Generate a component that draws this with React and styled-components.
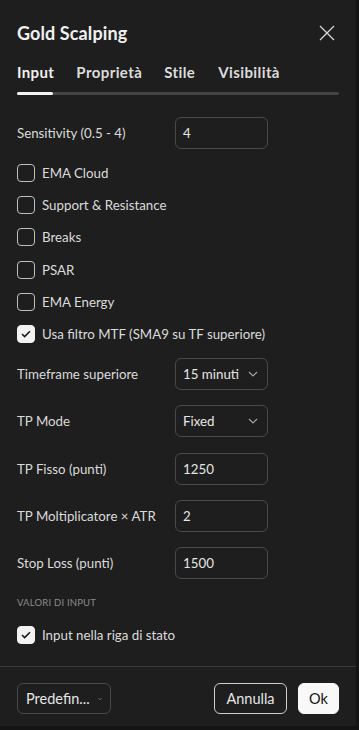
import styled, { createGlobalStyle } from 'styled-components';

const Global = createGlobalStyle`
  html, body {
    margin: 0;
    padding: 0;
    background: #141414;
  }
  body {
    font-family: Lato, "Noto Sans", sans-serif;
    -webkit-font-smoothing: antialiased;
  }
`

const Dialog = styled.div`
  width: 356px;
  height: 726px;
  background: #1e1e1e;
  color: #dbdbdb;
  display: flex;
  flex-direction: column;
  box-sizing: border-box;
`

const Header = styled.div`
  display: flex;
  align-items: center;
  justify-content: space-between;
  padding: 20px 20px 0 17px;
  height: 25px;
  h1 {
    margin: 0;
    font-size: 18px;
    font-weight: 700;
    color: #f0f0f0;
    letter-spacing: 0.1px;
  }
`

const Close = styled.button`
  background: none;
  border: none;
  padding: 0;
  width: 18px;
  height: 18px;
  display: flex;
  align-items: center;
  justify-content: center;
  color: #d6d6d6;
`

const Tabs = styled.div`
  margin: 17px 17px 0 17px;
  display: flex;
  height: 20px;
`

const Tab = styled.div`
  font-size: 15px;
  font-weight: 700;
  letter-spacing: 0.4px;
  color: ${p => (p.active ? '#f2f2f2' : '#dcdcdc')};
  margin-right: ${p => p.gap}px;
  line-height: 20px;
`

const Track = styled.div`
  margin: 10px 17px 0 17px;
  height: 3px;
  border-radius: 2px;
  background: #434343;
  display: flex;
`

const Indicator = styled.div`
  width: ${p => p.w}px;
  height: 3px;
  border-radius: 2px;
  background: #f2f2f2;
`

const Body = styled.div`
  flex: 1;
  padding: 22px 17px 0 17px;
  display: flex;
  flex-direction: column;
`

const FieldRow = styled.div`
  display: grid;
  grid-template-columns: 158px 93px;
  align-items: center;
  height: 32px;
  margin-bottom: ${p => p.mb ?? 15.3}px;
  font-size: 13.3px;
`

const Box = styled.div`
  height: 32px;
  box-sizing: border-box;
  border: 1px solid #4a4a4a;
  border-radius: 6px;
  display: flex;
  align-items: center;
  justify-content: space-between;
  padding: 0 9px 0 7px;
  font-size: 13.3px;
  color: #e6e6e6;
`

const CheckRow = styled.div`
  display: flex;
  align-items: center;
  gap: 7px;
  height: 18px;
  margin-bottom: ${p => p.mb ?? 14.2}px;
  font-size: 13.3px;
  color: #dbdbdb;
`

const Check = styled.span`
  width: 18px;
  height: 18px;
  box-sizing: border-box;
  border-radius: 4px;
  border: 1px solid ${p => (p.on ? '#f2f2f2' : '#bfbfbf')};
  background: ${p => (p.on ? '#f2f2f2' : 'transparent')};
  display: flex;
  align-items: center;
  justify-content: center;
  flex-shrink: 0;
`

const SectionTitle = styled.div`
  font-size: 9.5px;
  color: #8c8c8c;
  letter-spacing: 0.2px;
  margin: 8px 0 18px;
`

const Footer = styled.div`
  border-top: 1px solid #3a3a3a;
  padding: 16px 17px 0 17px;
  height: 43px;
  display: flex;
  align-items: flex-start;
  gap: 11px;
`

const Button = styled.button`
  height: 31px;
  box-sizing: border-box;
  border-radius: 6px;
  font-family: inherit;
  font-size: 14.5px;
  display: flex;
  align-items: center;
  justify-content: center;
  gap: 8px;
  padding: 0 ${p => p.px ?? 0}px;
  width: ${p => p.w}px;
  color: ${p => (p.primary ? '#131313' : '#e6e6e6')};
  background: ${p => (p.primary ? '#f8f8f8' : 'transparent')};
  border: 1px solid ${p => (p.primary ? '#f8f8f8' : p.strong ? '#cfcfcf' : '#4a4a4a')};
  margin-left: ${p => (p.push ? 'auto' : '0')};
`

const Chevron = () => (
  <svg width="10" height="6" viewBox="0 0 10 6" fill="none">
    <path d="M1 1l4 4 4-4" stroke="#a8a8a8" strokeWidth="1.1" />
  </svg>
)

const Tick = () => (
  <svg width="10" height="8" viewBox="0 0 10 8" fill="none">
    <path d="M1 4l2.6 2.6L9 1.2" stroke="#1a1a1a" strokeWidth="1.6" />
  </svg>
)

const Checkbox = ({ on, label, mb }) => (
  <CheckRow mb={mb}>
    <Check on={on}>{on && <Tick />}</Check>
    <span>{label}</span>
  </CheckRow>
)

const App = () => {
  return (
    <Dialog>
      <Global />
      <Header>
        <h1>Gold Scalping</h1>
        <Close>
          <svg width="16" height="16" viewBox="0 0 16 16" fill="none">
            <path d="M1 1l14 14M15 1L1 15" stroke="#d6d6d6" strokeWidth="1.3" />
          </svg>
        </Close>
      </Header>
      <Tabs>
        <Tab active gap={22}>Input</Tab>
        <Tab gap={22}>Proprietà</Tab>
        <Tab gap={23}>Stile</Tab>
        <Tab gap={0}>Visibilità</Tab>
      </Tabs>
      <Track>
        <Indicator w={36} />
      </Track>
      <Body>
        <FieldRow mb={15}>
          <span>Sensitivity (0.5 - 4)</span>
          <Box>4</Box>
        </FieldRow>
        <Checkbox label="EMA Cloud" />
        <Checkbox label="Support & Resistance" />
        <Checkbox label="Breaks" />
        <Checkbox label="PSAR" />
        <Checkbox label="EMA Energy" />
        <Checkbox on label="Usa filtro MTF (SMA9 su TF superiore)" mb={15} />
        <FieldRow>
          <span>Timeframe superiore</span>
          <Box>15 minuti <Chevron /></Box>
        </FieldRow>
        <FieldRow>
          <span>TP Mode</span>
          <Box>Fixed <Chevron /></Box>
        </FieldRow>
        <FieldRow>
          <span>TP Fisso (punti)</span>
          <Box>1250</Box>
        </FieldRow>
        <FieldRow>
          <span>TP Moltiplicatore × ATR</span>
          <Box>2</Box>
        </FieldRow>
        <FieldRow mb={10}>
          <span>Stop Loss (punti)</span>
          <Box>1500</Box>
        </FieldRow>
        <SectionTitle>VALORI DI INPUT</SectionTitle>
        <Checkbox on label="Input nella riga di stato" />
      </Body>
      <Footer>
        <Button w={94} px={8}>Predefin... <Chevron /></Button>
        <Button push strong w={73}>Annulla</Button>
        <Button primary w={41}>Ok</Button>
      </Footer>
    </Dialog>
  )
}

export default App
